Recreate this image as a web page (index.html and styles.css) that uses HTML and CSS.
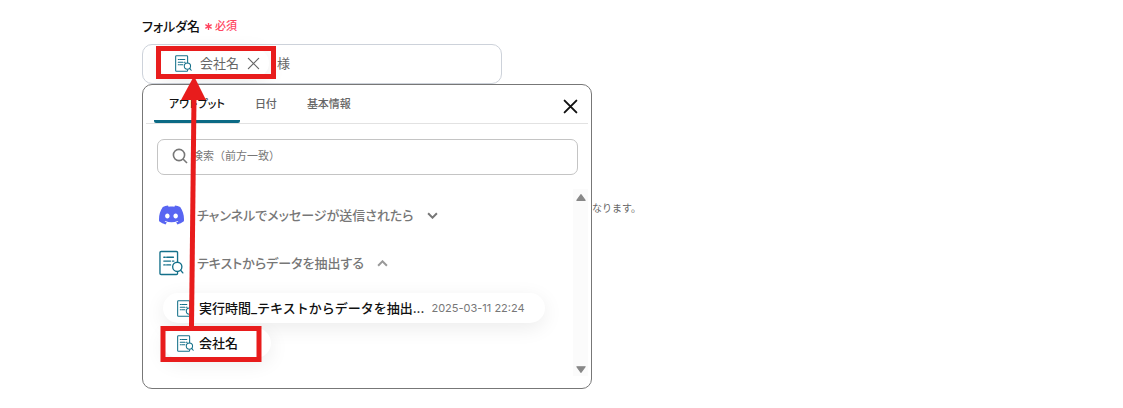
FILE: index.html
```html
<!DOCTYPE html>
<html lang="ja">
<head>
    <meta charset="UTF-8">
    <meta name="viewport" content="width=device-width, initial-scale=1.0">
    <title>フォルダ名</title>
    <link rel="stylesheet" href="styles.css">
</head>
<body>
    <svg class="defs" aria-hidden="true">
        <symbol id="extract" viewBox="0 0 26 26" fill="none" stroke="#14708a" stroke-linecap="round">
            <path d="M19.3 12V2.2c0-.8-.4-1.2-1.2-1.2H2.2C1.4 1 1 1.4 1 2.2v21.6c0 .8.4 1.2 1.2 1.2h15.9c.8 0 1.2-.4 1.2-1.2v-1"/>
            <path d="M5 7h1.500M8 7h7M5 11h7M14 11h1.500M5 15h1.500M8 15h4"/>
            <circle cx="19" cy="17" r="4.800"/>
            <path d="M22.500 20.500l2.300 2.800"/>
        </symbol>
        <symbol id="cross" viewBox="0 0 14 14" fill="none" stroke="currentColor" stroke-linecap="round">
            <path d="M1.500 1.500l11 11M12.500 1.500l-11 11"/>
        </symbol>
    </svg>

    <div class="form">
        <label class="field-label" for="folder">フォルダ名 <span class="required"><svg viewBox="0 0 10 10"><path d="M5 1v8M1.500 3l7 4M8.500 3l-7 4"/></svg>必須</span></label>
        <div class="field">
            <span class="chip">
                <svg class="icon-small"><use href="#extract"/></svg>
                会社名
                <button class="chip-remove" type="button" aria-label="削除"><svg><use href="#cross"/></svg></button>
            </span>
            <input class="field-input" id="folder" type="text" value="様">
        </div>

        <div class="row">
            <div class="popup">
                <div class="popup-header">
                    <div class="tabs">
                        <button class="tab active" type="button">アウトプット</button>
                        <button class="tab" type="button">日付</button>
                        <button class="tab" type="button">基本情報</button>
                    </div>
                    <button class="close" type="button" aria-label="閉じる"><svg><use href="#cross"/></svg></button>
                </div>
                <div class="search">
                    <svg viewBox="0 0 16 16"><circle cx="7" cy="7" r="5.600"/><path d="M11 11l4 4"/></svg>
                    <input type="text" placeholder="検索（前方一致）" aria-label="検索">
                </div>
                <div class="outputs">
                    <div class="list">
                        <button class="group" type="button">
                            <svg class="icon" viewBox="0 0 24 24" fill="#5865f2"><path d="M20.317 4.3698a19.7913 19.7913 0 00-4.8851-1.5152.0741.0741 0 00-.0785.0371c-.211.3753-.4447.8648-.6083 1.2495-1.8447-.2762-3.68-.2762-5.4868 0-.1636-.3933-.4058-.8742-.6177-1.2495a.077.077 0 00-.0785-.037 19.7363 19.7363 0 00-4.8852 1.515.0699.0699 0 00-.0321.0277C.5334 9.0458-.319 13.5799.0992 18.0578a.0824.0824 0 00.0312.0561c2.0528 1.5076 4.0413 2.4228 5.9929 3.0294a.0777.0777 0 00.0842-.0276c.4616-.6304.8731-1.2952 1.226-1.9942a.076.076 0 00-.0416-.1057c-.6528-.2476-1.2743-.5495-1.8722-.8923a.077.077 0 01-.0076-.1277c.1258-.0943.2517-.1923.3718-.2914a.0743.0743 0 01.0776-.0105c3.9278 1.7933 8.18 1.7933 12.0614 0a.0739.0739 0 01.0785.0095c.1202.099.246.1981.3728.2924a.077.077 0 01-.0066.1276 12.2986 12.2986 0 01-1.873.8914.0766.0766 0 00-.0407.1067c.3604.698.7719 1.3628 1.225 1.9932a.076.076 0 00.0842.0286c1.961-.6067 3.9495-1.5219 6.0023-3.0294a.077.077 0 00.0313-.0552c.5004-5.177-.8382-9.6739-3.5485-13.6604a.061.061 0 00-.0312-.0286zM8.02 15.3312c-1.1825 0-2.1569-1.0857-2.1569-2.419 0-1.3332.9555-2.4189 2.157-2.4189 1.2108 0 2.1757 1.0952 2.1568 2.419 0 1.3332-.9555 2.4189-2.1569 2.4189zm7.9748 0c-1.1825 0-2.1569-1.0857-2.1569-2.419 0-1.3332.9554-2.4189 2.1569-2.4189 1.2108 0 2.1757 1.0952 2.1568 2.419 0 1.3332-.946 2.4189-2.1568 2.4189Z"/></svg>
                            チャンネルでメッセージが送信されたら
                            <svg class="chevron" viewBox="0 0 10 6"><path d="M1 1l4 4 4-4"/></svg>
                        </button>
                        <button class="group" type="button">
                            <svg class="icon"><use href="#extract"/></svg>
                            テキストからデータを抽出する
                            <svg class="chevron light" viewBox="0 0 10 6"><path d="M1 5l4-4 4 4"/></svg>
                        </button>
                        <div class="items">
                            <button class="item" type="button">
                                <svg class="icon-small"><use href="#extract"/></svg>
                                実行時間_テキストからデータを抽出...
                                <span class="value">2025-03-11 22:24</span>
                            </button>
                            <button class="item" type="button">
                                <svg class="icon-small"><use href="#extract"/></svg>
                                会社名
                            </button>
                        </div>
                    </div>
                    <div class="scrollbar">
                        <svg viewBox="0 0 10 8"><path d="M5 1.500L8.700 6.500H1.300z"/></svg>
                        <svg viewBox="0 0 10 8"><path d="M5 6.500L8.700 1.500H1.300z"/></svg>
                    </div>
                </div>
            </div>
            <p class="help">なります。</p>
        </div>

        <!-- red marks: copy the value up into the field -->
        <svg class="marks" viewBox="0 0 130 330" fill="none" stroke="#e81c1c" stroke-width="5" aria-hidden="true">
            <rect x="16.500" y="30.500" width="115" height="28"/>
            <rect x="21" y="310.500" width="96" height="31"/>
            <path d="M49.500 308L52 80"/>
            <path d="M52 58L64 82H39z" fill="#e81c1c" stroke="none"/>
        </svg>
    </div>
</body>
</html>
```

FILE: styles.css
```css
* {
    margin: 0;
    padding: 0;
    box-sizing: border-box;
}

body {
    font-family: Inter, "Noto Sans CJK JP", sans-serif;
    font-size: 13px;
    line-height: 20px;
    color: #666;
    background-color: #fff;
}

button, input {
    font: inherit;
    color: inherit;
    background: none;
    border: none;
    outline: none;
}

button {
    cursor: pointer;
}

svg {
    display: block;
    flex-shrink: 0;
}

.defs {
    position: absolute;
    width: 0;
    height: 0;
}

.form {
    position: relative;
    padding: 16px 0 16px 142px;
}

.field-label {
    display: flex;
    align-items: center;
    gap: 4px;
    margin-bottom: 8px;
    font-weight: 500;
    font-feature-settings: "palt";
    color: #111;
}

.required {
    display: flex;
    align-items: center;
    gap: 2px;
    font-size: 11px;
    color: #ff4560;
}

.required svg {
    width: 9px;
    height: 9px;
    fill: none;
    stroke: #ff4560;
    stroke-width: 1.5;
}

.field {
    display: flex;
    align-items: center;
    max-width: 360px;
    height: 40px;
    padding: 0 16px 2px;
    border: 1px solid #cdd2da;
    border-radius: 10px;
}

.chip {
    display: flex;
    align-items: center;
    gap: 8px;
    height: 30px;
    padding: 0 9px 0 16px;
    border-radius: 15px;
    box-shadow: 0 4px 20px rgba(0, 0, 0, 0.08);
}

.chip-remove svg {
    width: 13px;
    height: 13px;
    stroke-width: 1.3;
}

.field-input {
    flex: 1;
    min-width: 0;
    padding-left: 8px;
}

.icon-small {
    width: 17px;
    height: 17px;
    stroke-width: 1.6;
}

.row {
    display: flex;
}

.popup {
    width: 450px;
    padding: 0 3px 12px;
    border: 1px solid #777;
    border-radius: 10px;
    background-color: #fff;
}

.popup-header {
    display: flex;
    align-items: center;
    justify-content: space-between;
    padding: 0 10px 0 8px;
    border-bottom: 1px solid #e2e2e2;
}

.tabs {
    display: flex;
    font-size: 11px;
    font-weight: 500;
    font-feature-settings: "palt";
}

.tab {
    height: 38px;
    padding: 2px 15px 0;
    font-feature-settings: inherit;
    border-bottom: 3px solid transparent;
}

.tab.active {
    color: #111;
    border-color: #0b6a85;
    border-radius: 2px;
}

.close {
    padding-top: 4px;
}

.close svg {
    width: 15px;
    height: 15px;
    stroke-width: 1.8;
    color: #111;
}

.search {
    display: flex;
    align-items: center;
    gap: 4px;
    height: 36px;
    margin: 15px 10px 14px 11px;
    padding: 0 14px 2px;
    font-size: 11px;
    border: 1px solid #c4c4c4;
    border-radius: 7px;
}

.search svg {
    width: 16px;
    height: 16px;
    fill: none;
    stroke: #777;
    stroke-width: 1.6;
}

.search input {
    flex: 1;
}

.search input::placeholder {
    color: #777;
}

.outputs {
    display: flex;
}

.list {
    flex: 1;
    padding: 2px 0 0 13px;
}

.group {
    display: flex;
    align-items: center;
    gap: 13px;
    height: 48px;
    font-weight: 500;
    font-feature-settings: "palt";
    color: #777;
}

.icon {
    width: 25px;
    height: 26px;
    stroke-width: 1.4;
}

.chevron {
    width: 11px;
    height: 7px;
    fill: none;
    stroke: #777;
    stroke-width: 1.8;
}

.chevron.light {
    stroke: #999;
}

.items {
    display: flex;
    flex-direction: column;
    align-items: flex-start;
    gap: 5px;
    padding: 6px 0 18px 4px;
}

.item {
    display: flex;
    align-items: center;
    gap: 5px;
    min-width: 108px;
    height: 30px;
    padding: 0 20px 0 14px;
    font-weight: 500;
    color: #111;
    background-color: #fff;
    border-radius: 15px;
    box-shadow: 0 5px 20px rgba(0, 0, 0, 0.08);
}

.value {
    padding-left: 2px;
    font-size: 11px;
    font-weight: 400;
    color: #777;
}

.scrollbar {
    display: flex;
    flex-direction: column;
    justify-content: space-between;
    width: 15px;
    padding: 4px 2px 2px;
    background-color: #fbfbfb;
}

.scrollbar svg {
    width: 12px;
    height: 9px;
    fill: #888;
    stroke: #888;
    stroke-linejoin: round;
}

.help {
    padding-top: 114px;
    font-size: 10px;
}

.marks {
    position: absolute;
    top: 18px;
    left: 142px;
    width: 130px;
    height: 330px;
    overflow: visible;
    pointer-events: none;
}
```
